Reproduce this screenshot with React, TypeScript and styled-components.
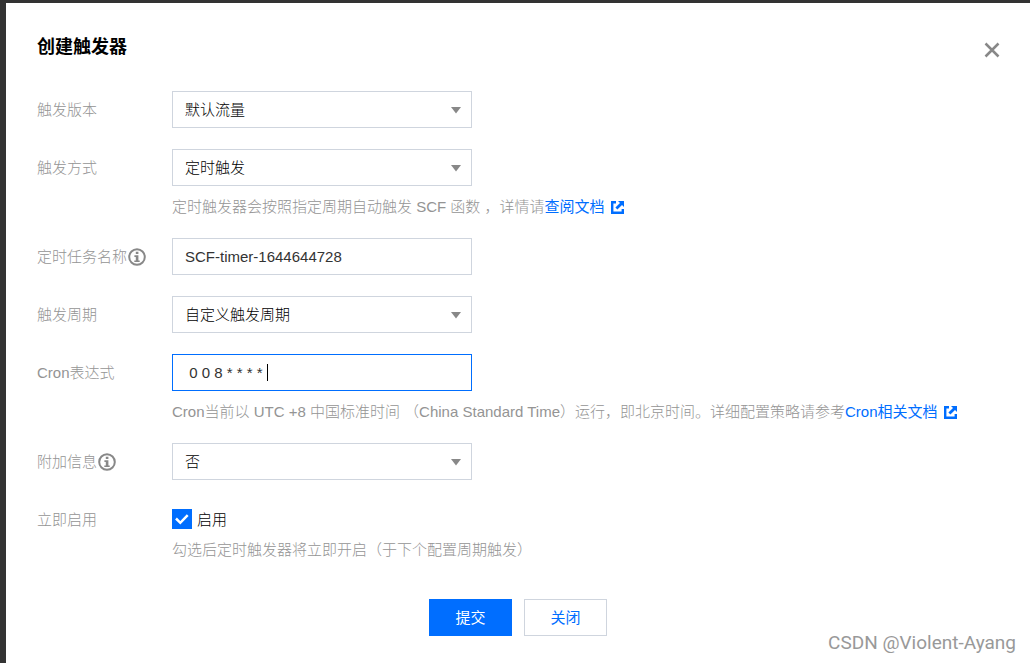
import React, { useState } from "react";
import styled, { createGlobalStyle } from "styled-components";

const GlobalStyle = createGlobalStyle`
  *, *::before, *::after { box-sizing: border-box; }
  html, body, #root { min-height: 100vh; margin: 0; }
  body {
    background: #333;
    font-family: "Liberation Sans", "Noto Sans CJK SC", sans-serif;
    font-size: 15px;
    line-height: 21px;
    font-weight: 300;
    color: #000;
  }
  button, input, select { font: inherit; color: inherit; }
`;

const Backdrop = styled.div`
  display: flex;
  min-height: 100vh;
  padding: 3px 0 0 6px;
  background: #333;
`;

const Dialog = styled.section`
  position: relative;
  flex: 1;
  min-width: 0;
  padding: 31px 31px 24px;
  background: #fff;
`;

const Header = styled.header`
  display: flex;
  justify-content: space-between;
  align-items: center;
  height: 26px;
  margin-bottom: 31px;
`;

const Title = styled.h1`
  margin: 0;
  font-size: 18px;
  line-height: 26px;
  font-weight: 700;
`;

const CloseButton = styled.button`
  display: flex;
  margin: 6px 0 0;
  padding: 0;
  border: 0;
  background: none;
  color: #888;

  svg { overflow: visible; }
`;

const Form = styled.form`
  display: flex;
  flex-direction: column;
  gap: 21px;
`;

const Row = styled.div`
  display: flex;
  align-items: flex-start;
`;

const Label = styled.label`
  display: flex;
  align-items: center;
  flex: 0 0 135px;
  height: 37px;
  color: #949494;
`;

const Field = styled.div`
  flex: 1;
  min-width: 0;
`;

const Control = styled.div`
  position: relative;
  width: 300px;
  max-width: 100%;
`;

const SelectBox = styled.select`
  display: block;
  width: 100%;
  height: 37px;
  padding: 0 32px 0 12px;
  border: 1px solid #cfd5de;
  border-radius: 0;
  background: #fff;
  appearance: none;
  outline: none;
`;

const Arrow = styled.svg`
  position: absolute;
  top: 16px;
  right: 10px;
  pointer-events: none;
`;

const TextBox = styled.input<{ $active?: boolean }>`
  display: block;
  width: 100%;
  height: 37px;
  padding: 0 12px;
  border: 1px solid ${(p) => (p.$active ? "#006eff" : "#cfd5de")};
  border-radius: 0;
  background: #fff;
  color: #333;
  outline: none;
`;

const Caret = styled.span`
  position: absolute;
  top: 10px;
  left: 95px;
  width: 1px;
  height: 17px;
  background: #000;
`;

const Hint = styled.p`
  margin: 10px 0 0;
  color: #949494;
`;

const Link = styled.a`
  color: #006eff;
  font-weight: 400;
  text-decoration: none;

  svg {
    margin-left: 6px;
    vertical-align: -2px;
  }
`;

const CheckLine = styled.label`
  display: flex;
  align-items: center;
  gap: 5px;
  height: 20px;
  margin-top: 8px;
`;

const CheckBox = styled.input`
  width: 20px;
  height: 20px;
  margin: 0;
  border: 1px solid #006eff;
  appearance: none;

  &:checked { background: #006eff; }
`;

const CheckWrap = styled.span`
  position: relative;
  display: flex;

  svg {
    position: absolute;
    inset: 0;
    pointer-events: none;
  }
`;

const Actions = styled.div`
  display: flex;
  justify-content: center;
  gap: 12px;
  margin-top: 18px;
`;

const Button = styled.button<{ $primary?: boolean }>`
  width: 83px;
  height: 37px;
  padding: 0;
  border: 1px solid ${(p) => (p.$primary ? "#006eff" : "#cfd5de")};
  background: ${(p) => (p.$primary ? "#006eff" : "#fff")};
  color: ${(p) => (p.$primary ? "#fff" : "#006eff")};
  font-weight: 400;
`;

const Watermark = styled.div`
  position: absolute;
  right: 14px;
  bottom: 8px;
  color: #999;
  font-family: Roboto, "Liberation Sans", sans-serif;
  font-size: 19px;
  line-height: 24px;
  font-weight: 400;
  text-shadow: -1px -1px 0 #fff;
`;

const InfoIcon = () => (
  <svg width="20" height="20" viewBox="0 0 20 20" fill="none" aria-hidden="true">
    <circle cx="10" cy="10" r="7.8" stroke="#888" strokeWidth="2" />
    <path d="M8.8 4.8h2.6v2.3H8.8zM7.4 8.3h4v5.1h1.3V15H7.3v-1.6h1.5V9.9H7.4z" fill="#888" />
  </svg>
);

const ExternalIcon = () => (
  <svg width="13" height="13" viewBox="0 0 13 13" fill="none" aria-hidden="true">
    <path d="M5 1.2H1.2v10.6h10.6V8" stroke="#006eff" strokeWidth="2.4" />
    <path d="M7 0h6v6l-2-2-4.6 4.6-2-2L9 2z" fill="#006eff" />
  </svg>
);

const Select = ({ id, value }: { id: string; value: string }) => (
  <Control>
    <SelectBox id={id} defaultValue={value}>
      <option>{value}</option>
    </SelectBox>
    <Arrow width="12" height="7" viewBox="0 0 12 7" aria-hidden="true">
      <path d="M1 0h10L6 6.5z" fill="#888" />
    </Arrow>
  </Control>
);

export default function App() {
  const [name, setName] = useState("SCF-timer-1644644728");
  const [cron, setCron] = useState(" 0 0 8 * * * *");
  const [enabled, setEnabled] = useState(true);

  return (
    <>
      <GlobalStyle />
      <Backdrop>
        <Dialog role="dialog" aria-labelledby="title">
          <Header>
            <Title id="title">创建触发器</Title>
            <CloseButton type="button" aria-label="关闭">
              <svg width="14" height="14" viewBox="0 0 14 14" aria-hidden="true">
                <path d="M.5 .5l13 13M13.5 .5l-13 13" stroke="currentColor" strokeWidth="2.5" />
              </svg>
            </CloseButton>
          </Header>
          <Form onSubmit={(e) => e.preventDefault()}>
            <Row>
              <Label htmlFor="version">触发版本</Label>
              <Field><Select id="version" value="默认流量" /></Field>
            </Row>
            <Row>
              <Label htmlFor="method">触发方式</Label>
              <Field>
                <Select id="method" value="定时触发" />
                <Hint>
                  定时触发器会按照指定周期自动触发 SCF 函数 ，详情请<Link href="#scf">查阅文档<ExternalIcon /></Link>
                </Hint>
              </Field>
            </Row>
            <Row>
              <Label htmlFor="name">定时任务名称<InfoIcon /></Label>
              <Field>
                <Control>
                  <TextBox id="name" value={name} onChange={(e) => setName(e.target.value)} />
                </Control>
              </Field>
            </Row>
            <Row>
              <Label htmlFor="period">触发周期</Label>
              <Field><Select id="period" value="自定义触发周期" /></Field>
            </Row>
            <Row>
              <Label htmlFor="cron">Cron表达式</Label>
              <Field>
                <Control>
                  <TextBox id="cron" $active value={cron} onChange={(e) => setCron(e.target.value)} />
                  <Caret />
                </Control>
                <Hint>
                  Cron当前以 UTC +8 中国标准时间 （China Standard Time）运行，即北京时间。详细配置策略请参考<Link href="#cron">Cron相关文档<ExternalIcon /></Link>
                </Hint>
              </Field>
            </Row>
            <Row>
              <Label htmlFor="extra">附加信息<InfoIcon /></Label>
              <Field><Select id="extra" value="否" /></Field>
            </Row>
            <Row>
              <Label htmlFor="enabled">立即启用</Label>
              <Field>
                <CheckLine>
                  <CheckWrap>
                    <CheckBox
                      id="enabled"
                      type="checkbox"
                      checked={enabled}
                      onChange={(e) => setEnabled(e.target.checked)}
                    />
                    <svg width="20" height="20" viewBox="0 0 20 20" fill="none" aria-hidden="true">
                      <path d="M4 9.5l4.3 4.3 7.4-7.6" stroke="#fff" strokeWidth="2.5" />
                    </svg>
                  </CheckWrap>
                  启用
                </CheckLine>
                <Hint>勾选后定时触发器将立即开启（于下个配置周期触发）</Hint>
              </Field>
            </Row>
            <Actions>
              <Button type="submit" $primary>提交</Button>
              <Button type="button">关闭</Button>
            </Actions>
          </Form>
          <Watermark>CSDN @Violent-Ayang</Watermark>
        </Dialog>
      </Backdrop>
    </>
  );
}
